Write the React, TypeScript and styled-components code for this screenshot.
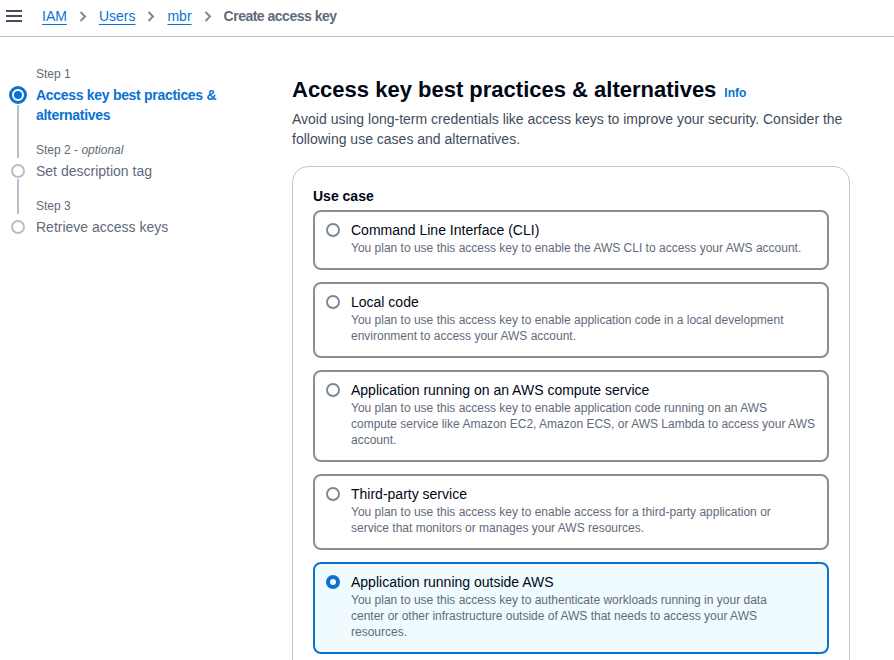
import React from "react";
import styled, { createGlobalStyle } from "styled-components";

const Global = createGlobalStyle`
  html, body { margin: 0; padding: 0; background: #ffffff; }
  body {
    font-family: "Liberation Sans", Arial, sans-serif;
    color: #000716;
    font-size: 14px;
    line-height: 20px;
  }
  * { box-sizing: border-box; }
`;

const TopBar = styled.header`
  height: 37px;
  display: flex;
  align-items: center;
  padding: 0 0 4px 6px;
  border-bottom: 1px solid #b6bec9;
`;

const MenuButton = styled.button`
  width: 16px;
  height: 12px;
  padding: 0;
  margin: 0 20px 0 0;
  border: 0;
  background: transparent;
  display: flex;
  flex-direction: column;
  justify-content: space-between;
  cursor: pointer;
  span {
    display: block;
    height: 2px;
    background: #414d5c;
  }
`;

const Crumbs = styled.nav`
  display: flex;
  align-items: center;
  gap: 12px;
  font-size: 14px;
`;

const CrumbLink = styled.a`
  color: #0972d3;
  text-decoration: underline;
  text-underline-offset: 3px;
`;

const CrumbCurrent = styled.span`
  color: #5f6b7a;
  font-weight: 700;
  letter-spacing: -0.5px;
`;

const Sep = styled.svg`
  width: 8px;
  height: 11px;
  display: block;
  margin-top: 1px;
`;

const Layout = styled.div`
  display: flex;
  align-items: flex-start;
`;

const StepNav = styled.ol`
  width: 292px;
  flex: none;
  list-style: none;
  margin: 0;
  padding: 29px 0 0 0;
`;

const StepItem = styled.li`
  display: grid;
  grid-template-columns: 36px 200px;
`;

const Rail = styled.div`
  display: flex;
  flex-direction: column;
  align-items: center;
`;

const Line = styled.div<{ $top?: number }>`
  width: 2px;
  flex: 1;
  min-height: 4px;
  margin-top: ${(p) => p.$top ?? 0}px;
  background: #b6bec9;
`;

const StepLabel = styled.div`
  font-size: 12px;
  line-height: 16px;
  color: #5f6b7a;
  em { font-style: italic; }
`;

const StepTitle = styled.div<{ $active?: boolean; $last?: boolean }>`
  font-size: 14px;
  line-height: 20px;
  padding-top: 3px;
  padding-bottom: ${(p) => (p.$last ? 0 : 17)}px;
  color: ${(p) => (p.$active ? "#0972d3" : "#5f6b7a")};
  font-weight: ${(p) => (p.$active ? 700 : 400)};
  letter-spacing: ${(p) => (p.$active ? "-0.3px" : "0")};
`;

const ActiveDot = styled.span`
  width: 18px;
  height: 18px;
  margin-top: 4px;
  border-radius: 50%;
  border: 3px solid #0972d3;
  display: flex;
  align-items: center;
  justify-content: center;
  flex: none;
  &::after {
    content: "";
    width: 8px;
    height: 8px;
    border-radius: 50%;
    background: #0972d3;
  }
`;

const IdleDot = styled.span`
  width: 14px;
  height: 14px;
  margin-top: 6px;
  border-radius: 50%;
  border: 2px solid #b6bec9;
  flex: none;
`;

const Main = styled.main`
  width: 560px;
  padding-top: 39px;
`;

const Heading = styled.h1`
  margin: 0;
  font-size: 22px;
  line-height: 28px;
  height: 28px;
  font-weight: 700;
  display: flex;
  align-items: baseline;
  gap: 8px;
`;

const Info = styled.a`
  font-size: 12px;
  line-height: 12px;
  font-weight: 700;
  color: #0972d3;
  text-decoration: none;
`;

const Lead = styled.p`
  margin: 5px 0 0 0;
  font-size: 14px;
  line-height: 20px;
  color: #414d5c;
`;

const Card = styled.section`
  margin-top: 17px;
  width: 558px;
  border: 1px solid #c6c6cd;
  border-radius: 16px;
  padding: 19px 20px 24px 20px;
`;

const FieldLabel = styled.div`
  font-size: 14px;
  line-height: 20px;
  font-weight: 700;
  margin-bottom: 4px;
`;

const Options = styled.div`
  display: flex;
  flex-direction: column;
  gap: 12px;
`;

const Tile = styled.label<{ $checked?: boolean }>`
  display: flex;
  align-items: flex-start;
  gap: 11px;
  padding: 8px 12px 12px 11px;
  border: 2px solid ${(p) => (p.$checked ? "#0972d3" : "#8c8c94")};
  border-radius: 8px;
  background: ${(p) => (p.$checked ? "#f0fbff" : "#ffffff")};
  cursor: pointer;
`;

const Radio = styled.span<{ $checked?: boolean }>`
  flex: none;
  width: 14px;
  height: 14px;
  margin-top: 3px;
  border-radius: 50%;
  background: #ffffff;
  border: ${(p) => (p.$checked ? "4px solid #0972d3" : "2px solid #7d8998")};
`;

const TileText = styled.div`
  display: flex;
  flex-direction: column;
`;

const TileTitle = styled.span`
  font-size: 14px;
  line-height: 20px;
  color: #000716;
`;

const TileDesc = styled.span`
  font-size: 12px;
  line-height: 16px;
  color: #5f6b7a;
  white-space: nowrap;
`;

const steps = [
  { label: "Step 1", title: "Access key best practices & alternatives" },
  { label: "Step 2", optional: true, title: "Set description tag" },
  { label: "Step 3", title: "Retrieve access keys" },
];

const options = [
  {
    title: "Command Line Interface (CLI)",
    lines: ["You plan to use this access key to enable the AWS CLI to access your AWS account."],
  },
  {
    title: "Local code",
    lines: [
      "You plan to use this access key to enable application code in a local development",
      "environment to access your AWS account.",
    ],
  },
  {
    title: "Application running on an AWS compute service",
    lines: [
      "You plan to use this access key to enable application code running on an AWS",
      "compute service like Amazon EC2, Amazon ECS, or AWS Lambda to access your AWS",
      "account.",
    ],
  },
  {
    title: "Third-party service",
    lines: [
      "You plan to use this access key to enable access for a third-party application or",
      "service that monitors or manages your AWS resources.",
    ],
  },
  {
    title: "Application running outside AWS",
    lines: [
      "You plan to use this access key to authenticate workloads running in your data",
      "center or other infrastructure outside of AWS that needs to access your AWS",
      "resources.",
    ],
  },
];

const Chevron = () => (
  <Sep viewBox="0 0 8 11" fill="none">
    <path d="M1.5 1 L6 5.5 L1.5 10" stroke="#7d8998" strokeWidth="2" />
  </Sep>
);

export default function App() {
  const selected = 4;
  return (
    <>
      <Global />
      <TopBar>
        <MenuButton aria-label="Menu">
          <span />
          <span />
          <span />
        </MenuButton>
        <Crumbs>
          <CrumbLink>IAM</CrumbLink>
          <Chevron />
          <CrumbLink>Users</CrumbLink>
          <Chevron />
          <CrumbLink>mbr</CrumbLink>
          <Chevron />
          <CrumbCurrent>Create access key</CrumbCurrent>
        </Crumbs>
      </TopBar>
      <Layout>
        <StepNav>
          {steps.map((s, i) => {
            const first = i === 0;
            const last = i === steps.length - 1;
            return (
              <StepItem key={s.label}>
                <Rail>{!first && <Line />}</Rail>
                <StepLabel>
                  {s.label}
                  {s.optional && (
                    <>
                      {" - "}
                      <em>optional</em>
                    </>
                  )}
                </StepLabel>
                <Rail>
                  {first ? <ActiveDot /> : <IdleDot />}
                  {!last && <Line $top={1} />}
                </Rail>
                <StepTitle $active={first} $last={last}>
                  {s.title}
                </StepTitle>
              </StepItem>
            );
          })}
        </StepNav>
        <Main>
          <Heading>
            Access key best practices &amp; alternatives
            <Info>Info</Info>
          </Heading>
          <Lead>
            Avoid using long-term credentials like access keys to improve your security. Consider the
            following use cases and alternatives.
          </Lead>
          <Card>
            <FieldLabel>Use case</FieldLabel>
            <Options>
              {options.map((o, i) => (
                <Tile key={o.title} $checked={i === selected}>
                  <Radio $checked={i === selected} />
                  <TileText>
                    <TileTitle>{o.title}</TileTitle>
                    {o.lines.map((l) => (
                      <TileDesc key={l}>{l}</TileDesc>
                    ))}
                  </TileText>
                </Tile>
              ))}
            </Options>
          </Card>
        </Main>
      </Layout>
    </>
  );
}
